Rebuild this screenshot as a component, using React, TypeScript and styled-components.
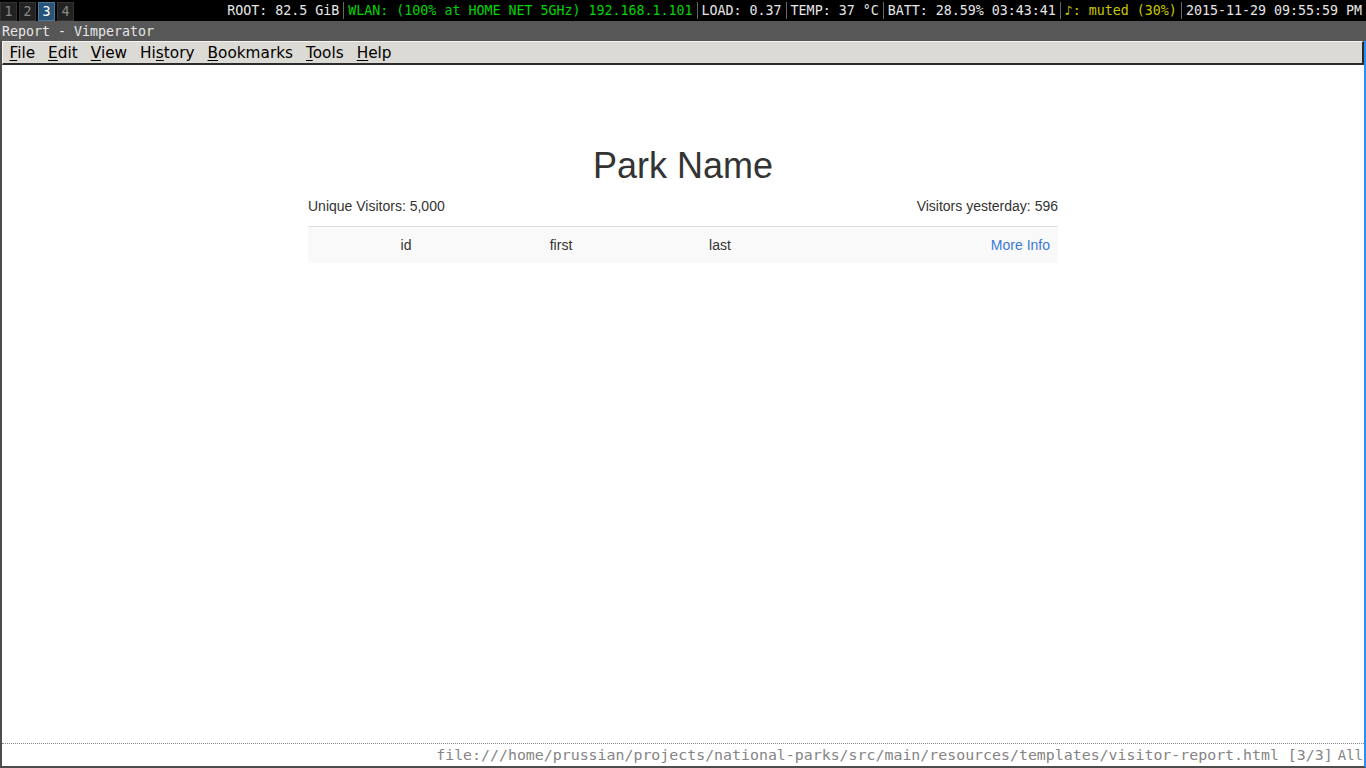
import React from 'react';
import styled, { createGlobalStyle } from 'styled-components';

const GlobalStyle = createGlobalStyle`
  html, body {
    margin: 0;
    padding: 0;
    width: 1366px;
    height: 768px;
    overflow: hidden;
    background: #000;
  }
  * {
    box-sizing: border-box;
  }
`;

type Block = { text: string; color?: string };

const blocks: Block[] = [
  { text: 'ROOT: 82.5 GiB' },
  { text: 'WLAN: (100% at HOME NET 5GHz) 192.168.1.101', color: '#00d600' },
  { text: 'LOAD: 0.37' },
  { text: 'TEMP: 37 °C' },
  { text: 'BATT: 28.59% 03:43:41' },
  { text: '♪: muted (30%)', color: '#c8c800' },
  { text: '2015-11-29 09:55:59 PM' },
];

const menus: [string, string, string][] = [
  ['', 'F', 'ile'],
  ['', 'E', 'dit'],
  ['', 'V', 'iew'],
  ['Hi', 's', 'tory'],
  ['', 'B', 'ookmarks'],
  ['', 'T', 'ools'],
  ['', 'H', 'elp'],
];

export default function App() {
  return (
    <Screen>
      <GlobalStyle />
      <Bar>
        <Workspaces>
          {[1, 2, 3, 4].map((n) => (
            <Tag key={n} $active={n === 3}>
              {n}
            </Tag>
          ))}
        </Workspaces>
        <Status>
          {blocks.map((b, i) => (
            <React.Fragment key={b.text}>
              <StatusText $color={b.color}>{b.text}</StatusText>
              {i < blocks.length - 1 && <Separator />}
            </React.Fragment>
          ))}
        </Status>
      </Bar>
      <TitleBar>Report - Vimperator</TitleBar>
      <WindowBody>
        <MenuBar>
          {menus.map(([pre, key, post]) => (
            <MenuItem key={pre + key + post}>
              {pre}
              <Key>{key}</Key>
              {post}
            </MenuItem>
          ))}
        </MenuBar>
        <Page>
          <Container>
            <Heading>Park Name</Heading>
            <Summary>
              <span>Unique Visitors: 5,000</span>
              <span>Visitors yesterday: 596</span>
            </Summary>
            <TableRow>
              <Cell>id</Cell>
              <Cell>first</Cell>
              <Cell>last</Cell>
              <Cell $align="right">
                <Link href="#">More Info</Link>
              </Cell>
            </TableRow>
          </Container>
        </Page>
        <StatusLine>
          <Url>
            file:///home/prussian/projects/national-parks/src/main/resources/templates/visitor-report.html
            [3/3]
          </Url>
          <Position>All</Position>
        </StatusLine>
      </WindowBody>
    </Screen>
  );
}

const Screen = styled.div`
  width: 1366px;
  height: 768px;
  display: flex;
  flex-direction: column;
  background: #000;
`;

const Bar = styled.div`
  height: 21px;
  display: flex;
  align-items: center;
  justify-content: space-between;
  background: #000;
  font-family: 'DejaVu Sans Mono', monospace;
  font-size: 13.3px;
`;

const Workspaces = styled.div`
  display: flex;
  gap: 2px;
  height: 19px;
  margin-top: 1px;
`;

const Tag = styled.div<{ $active?: boolean }>`
  width: 17px;
  height: 19px;
  display: flex;
  align-items: center;
  justify-content: center;
  background: ${({ $active }) => ($active ? '#285577' : '#222222')};
  border: 1px solid ${({ $active }) => ($active ? '#4c7899' : '#333333')};
  color: ${({ $active }) => ($active ? '#ffffff' : '#888888')};
`;

const Status = styled.div`
  display: flex;
  align-items: center;
  height: 21px;
  padding-right: 4px;
`;

const StatusText = styled.span<{ $color?: string }>`
  color: ${({ $color }) => $color || '#e6e6e6'};
  white-space: pre;
`;

const Separator = styled.span`
  width: 9px;
  height: 17px;
  display: flex;
  justify-content: center;
  &::before {
    content: '';
    width: 1px;
    height: 100%;
    background: #666666;
  }
`;

const TitleBar = styled.div`
  height: 20px;
  padding: 0 2px;
  display: flex;
  align-items: center;
  background: #575757;
  color: #e8e8e8;
  font-family: 'DejaVu Sans Mono', monospace;
  font-size: 13.3px;
`;

const WindowBody = styled.div`
  flex: 1;
  display: flex;
  flex-direction: column;
  background: #fff;
  border-left: 2px solid #4d4d4d;
  border-right: 2px solid #2f8cf0;
  border-bottom: 2px solid #4d4d4d;
`;

const MenuBar = styled.div`
  height: 24px;
  display: flex;
  align-items: center;
  background: #dcdad5;
  border-top: 1px solid #f4f3f1;
  border-left: 1px solid #f4f3f1;
  border-bottom: 2px solid #2b2b2b;
  border-right: 2px solid #2b2b2b;
  font-family: 'DejaVu Sans', sans-serif;
  font-size: 15.3px;
  color: #000;
`;

const MenuItem = styled.span`
  padding: 0 6.5px;
  line-height: 20px;
`;

const Key = styled.span`
  text-decoration: underline;
  text-underline-offset: 2px;
`;

const Page = styled.div`
  flex: 1;
  background: #fff;
  font-family: 'Liberation Sans', Arial, sans-serif;
  font-size: 14px;
  line-height: 20px;
  color: #333;
`;

const Container = styled.div`
  width: 750px;
  margin: 0 auto;
  padding-top: 61px;
`;

const Heading = styled.h1`
  margin: 20px 0 10px;
  font-size: 36px;
  font-weight: 500;
  line-height: 1.1;
  text-align: center;
`;

const Summary = styled.p`
  margin: 0 0 10px;
  display: flex;
  justify-content: space-between;
`;

const TableRow = styled.div`
  display: grid;
  grid-template-columns: 196px 114px 204px 1fr;
  background: #f9f9f9;
  border-top: 1px solid #dddddd;
`;

const Cell = styled.div<{ $align?: string }>`
  padding: 8px;
  line-height: 20px;
  text-align: ${({ $align }) => $align || 'center'};
`;

const Link = styled.a`
  color: #3a7bd5;
  text-decoration: none;
`;

const StatusLine = styled.div`
  height: 23px;
  display: flex;
  align-items: center;
  justify-content: flex-end;
  border-top: 1px dotted #8a8a8a;
  font-family: 'DejaVu Sans Mono', monospace;
  font-size: 14.9px;
  color: #858585;
  white-space: nowrap;
  padding-right: 1px;
`;

const Url = styled.span``;

const Position = styled.span`
  margin-left: 5px;
  font-size: 14px;
`;
